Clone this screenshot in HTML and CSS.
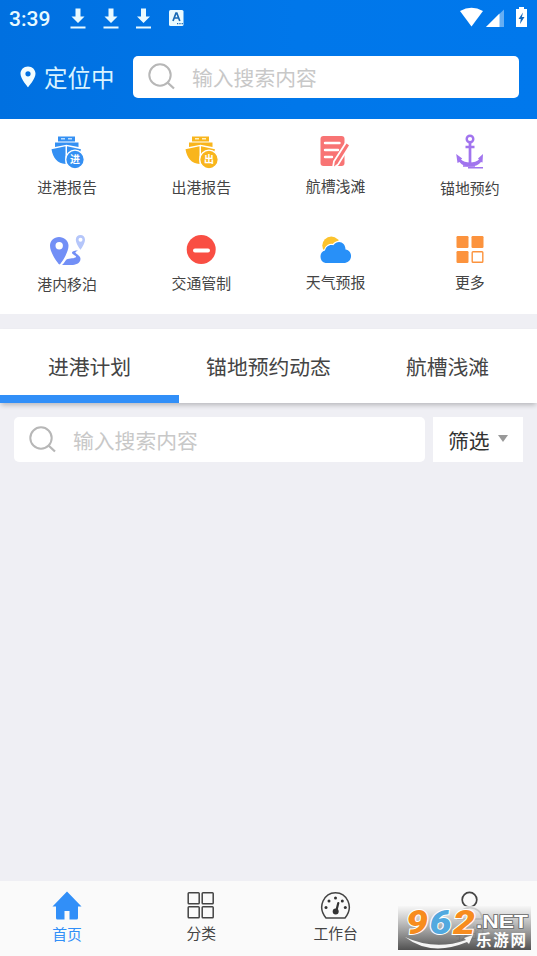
FILE: index.html
```html
<!DOCTYPE html>
<html lang="zh-CN">
<head>
<meta charset="utf-8">
<title>首页</title>
<link rel="stylesheet" href="styles.css">
</head>
<body>
<div class="app">
  <header class="header">
    <div class="status">
      <span class="clock">3:39</span>
      <svg class="status-left" width="120" height="24" viewBox="0 0 120 24" fill="#e9faff">
        <path d="M5.500 2h5v8h4l-6.500 6.500L1.500 10h4zM.5 20h15v2H.5z" transform="translate(0 .5)"/>
        <path d="M5.500 2h5v8h4l-6.500 6.500L1.500 10h4zM.5 20h15v2H.5z" transform="translate(33 .5)"/>
        <path d="M5.500 2h5v8h4l-6.500 6.500L1.500 10h4zM.5 20h15v2H.5z" transform="translate(65.500 .5)"/>
        <rect x="99" y="4" width="14.500" height="16" rx="1.500"/>
        <path d="m103 15 3-8h.8l3 8m-5.600-3h4.500" fill="none" stroke="#1769b5" stroke-width="1.700"/>
        <path d="M107 17h1.300v1.300H107zm2.300 0h1.300v1.300h-1.300zm2.300 0h1.300v1.300h-1.300z" fill="#1769b5"/>
      </svg>
      <svg class="status-right" width="70" height="24" viewBox="0 0 70 24" fill="#fff">
        <path d="M0 5Q11.500-1.500 23 5L11.500 20.500z"/>
        <path d="M26 21 44 3.500V21z" opacity=".4"/>
        <path d="M26 21 39.500 7.500V21z"/>
        <path d="M59 1h5v2H67v18H56V3h3z"/>
        <path d="m63 6.500-4.500 6.500h2.300L60 18l4.500-7h-2.600z" fill="#1267bd"/>
      </svg>
    </div>
    <div class="header-row">
      <svg class="pin" width="16" height="22" viewBox="0 0 16 22"><path fill="#f2fdff" fill-rule="evenodd" d="M8 .5C3.700.5.500 3.700.500 7.800.500 13 8 21.300 8 21.300S15.500 13 15.500 7.800C15.500 3.700 12.300.500 8 .500zm0 4.700a2.600 2.600 0 1 1 0 5.200 2.600 2.600 0 0 1 0-5.200z"/></svg>
      <span class="location">定位中</span>
      <div class="search search-top">
        <svg class="lens" width="27" height="27" viewBox="0 0 27 27" fill="none" stroke="#b7b7b7" stroke-width="2"><circle cx="12" cy="12" r="10.700"/><path d="m19.500 19.500 6.500 6" stroke-width="2.300"/></svg>
        <span>输入搜索内容</span>
      </div>
    </div>
  </header>

  <section class="menu">
    <div class="cell">
      <svg class="icon" viewBox="0 0 40 40"><g fill="#3490f3"><path d="M11 4.500h17v5H11zM8 10.500h23.500V15l-12-2.200L8 15z"/><path d="m4.500 17.300 14-3V32C10.500 31.500 6 26.500 4.500 17.300zM20 14.300l14 3-1.500 5H20z"/><circle cx="28" cy="27.500" r="9.300" stroke="#fff" stroke-width="1.300"/></g><path d="M14 6.800h4m3 0h4" stroke="#b9ddff" stroke-width="1.500"/><text class="badge-text" x="28" y="31">进</text></svg>
      <span>进港报告</span>
    </div>
    <div class="cell">
      <svg class="icon" viewBox="0 0 40 40"><g fill="#f9b51c"><path d="M11 4.500h17v5H11zM8 10.500h23.500V15l-12-2.200L8 15z"/><path d="m4.500 17.300 14-3V32C10.500 31.500 6 26.500 4.500 17.300zM20 14.300l14 3-1.500 5H20z"/><circle cx="28" cy="27.500" r="9.300" stroke="#fff" stroke-width="1.300"/></g><path d="M14 6.800h4m3 0h4" stroke="#fff0bd" stroke-width="1.500"/><text class="badge-text" x="28" y="31">出</text></svg>
      <span>出港报告</span>
    </div>
    <div class="cell">
      <svg class="icon" viewBox="0 0 40 40"><rect x="4.500" y="4" width="24" height="30" rx="3" fill="#f87474"/><path d="M9 11h14.500M9 18h13M9 25h7" stroke="#fff" stroke-width="2.400" stroke-linecap="round"/><path d="m30.500 11.500 2.500 1.700-11.500 18.500-3.500 2.800.8-4.800z" fill="#f87474" stroke="#fff" stroke-width="3.500"/><path d="m30.500 11.500 2.500 1.700-11.500 18.500-3.500 2.800.8-4.800z" fill="#f87474"/></svg>
      <span>航槽浅滩</span>
    </div>
    <div class="cell low">
      <svg class="icon" viewBox="0 0 40 40" fill="none" stroke="#a174ee"><circle cx="20" cy="7" r="3.300" stroke-width="2.400"/><path d="M20 10.500v22M15.500 15h9" stroke-width="2.700"/><path d="M6.200 22 7.500 31l2-1c4 6 17 6 21.500 0l1.500.5.500-8.500-5 4.500 1 1c-3.500 4-14.500 4-18 0l1.200-1z" fill="#a174ee" stroke="none"/><path d="M18 35.800h15M13 34h12" stroke-width="1.500"/></svg>
      <span>锚地预约</span>
    </div>
    <div class="cell low">
      <svg class="icon" viewBox="0 0 40 40"><path fill="#728ff6" fill-rule="evenodd" d="M12 7C7 7 3 10.800 3 15.800 3 23 11.500 34.500 12.500 34.500S21.500 23 21.500 15.800C21.500 10.800 17 7 12 7zm.2 5a3.700 3.700 0 1 1 0 7.400 3.700 3.700 0 0 1 0-7.400z"/><path d="M15 35c2-1 3-4.500 4.500-5.500 3-1.200 8.500-1 9.500-2.500.5-1.500-4.500-2.500-4-4.500.5-1.500 3-2 6-2-1.500.8-3 1.500-2.500 2.300.8 1.500 5 2.700 5 6 0 5-5.500 6.200-9 6.200z" fill="#728ff6"/><path fill="#b5c6fa" fill-rule="evenodd" d="M33.500 5c-2.700 0-4.700 2-4.700 4.700 0 4 4.700 10 4.700 10s4.500-6 4.500-10C38 7 36 5 33.500 5zm0 2.700a2 2 0 1 1 0 4 2 2 0 0 1 0-4z"/></svg>
      <span>港内移泊</span>
    </div>
    <div class="cell mid">
      <svg class="icon" viewBox="0 0 40 40"><circle cx="20.200" cy="19.500" r="14.500" fill="#f94e43"/><path d="M14 20.500h13" stroke="#fff" stroke-width="4" stroke-linecap="round"/></svg>
      <span>交通管制</span>
    </div>
    <div class="cell">
      <svg class="icon" viewBox="0 0 40 40"><circle cx="15.300" cy="15.500" r="9" fill="#fcc32d"/><path d="M9.500 33a6.500 6.500 0 0 1-.5-12.500c.8-4 4.500-6.500 8.300-5.300 5-6 12.200-2.500 12.200 4.300 7.500 1 7.500 12.500-.5 13.500z" fill="#2890f8" stroke="#fff" stroke-width="2.400" paint-order="stroke"/></svg>
      <span>天气预报</span>
    </div>
    <div class="cell">
      <svg class="icon" viewBox="0 0 40 40" fill="#fc933d"><rect x="6.500" y="6" width="12" height="12" rx="1.200"/><rect x="21.500" y="6" width="12" height="12" rx="1.200"/><rect x="6.500" y="21" width="12" height="12" rx="1.200"/><rect x="22.200" y="21.700" width="10.600" height="10.600" rx=".8" fill="#fff" stroke="#fc933d" stroke-width="1.400"/></svg>
      <span>更多</span>
    </div>
  </section>

  <nav class="tabs">
    <span class="tab active">进港计划</span>
    <span class="tab">锚地预约动态</span>
    <span class="tab">航槽浅滩</span>
  </nav>

  <div class="filters">
    <div class="search">
      <svg class="lens" width="27" height="27" viewBox="0 0 27 27" fill="none" stroke="#b7b7b7" stroke-width="2"><circle cx="12" cy="12" r="10.700"/><path d="m19.500 19.500 6.500 6" stroke-width="2.300"/></svg>
      <span>输入搜索内容</span>
    </div>
    <div class="filter">筛选<i class="caret"></i></div>
  </div>

  <main class="content"></main>

  <footer class="bottom">
    <div class="nav on">
      <svg class="nav-icon" viewBox="0 0 32 32"><path d="M16 1.500 1.500 16.500H5V28a1.500 1.500 0 0 0 1.500 1.500h7V21h5v8.500h7A1.500 1.500 0 0 0 27 28V16.500h3.500z" fill="#318ff8"/></svg>
      <span>首页</span>
    </div>
    <div class="nav">
      <svg class="nav-icon" viewBox="0 0 32 32" fill="none" stroke="#444" stroke-width="1.500"><rect x="3.200" y="2.700" width="11" height="11" rx=".8"/><rect x="17.200" y="2.700" width="11" height="11" rx=".8"/><rect x="3.200" y="16.700" width="11" height="11" rx=".8"/><rect x="17.200" y="16.700" width="11" height="11" rx=".8"/></svg>
      <span>分类</span>
    </div>
    <div class="nav">
      <svg class="nav-icon" viewBox="0 0 32 32"><path d="M6 28C-3.500 16.500 4.500 2.700 15.500 2.700S34.500 16.500 25 28z" fill="none" stroke="#444" stroke-width="1.500" stroke-linejoin="round"/><path d="m18.300 13-2 8" stroke="#333" stroke-width="2.200" stroke-linecap="round"/><g fill="#333"><circle cx="15.700" cy="21.500" r="3"/><circle cx="15.500" cy="8" r="1.500"/><circle cx="9" cy="11" r="1.500"/><circle cx="22.300" cy="11" r="1.500"/><circle cx="6" cy="17.500" r="1.500"/><circle cx="25.300" cy="17.500" r="1.500"/></g></svg>
      <span>工作台</span>
    </div>
    <div class="nav">
      <svg class="nav-icon" viewBox="0 0 32 32" fill="none" stroke="#444" stroke-width="1.700"><circle cx="15.500" cy="9.700" r="7.300"/><path d="M4 29c0-15 24-15 24 0z"/></svg>
      <span>我的</span>
    </div>
  </footer>

  <svg class="watermark" width="133" height="45" viewBox="0 0 133 45">
    <defs>
      <linearGradient id="shade" x1="0" y1="0" x2="0" y2="1"><stop offset="0" stop-color="#f6f6f6" stop-opacity=".8"/><stop offset=".35" stop-color="#bbb" stop-opacity=".88"/><stop offset="1" stop-color="#484848" stop-opacity=".95"/></linearGradient>
    </defs>
    <rect width="133" height="44" fill="url(#shade)"/>
    <path d="M7 31q30 14 61 3l-2-2 9-3-4 9-2-2Q33 51 7 31z" fill="#f4f4f4"/>
    <g class="mark-number">
      <text x="8" y="28" textLength="22" lengthAdjust="spacingAndGlyphs" fill="#f78c1e">9</text>
      <text x="31.500" y="28" textLength="22" lengthAdjust="spacingAndGlyphs" fill="#52a9df">6</text>
      <text x="55" y="28" textLength="22" lengthAdjust="spacingAndGlyphs" fill="#f78c1e">2</text>
    </g>
    <text class="mark-net" x="78" y="22" textLength="52" lengthAdjust="spacingAndGlyphs">.NET</text>
    <text class="mark-name" x="78" y="40" textLength="50">乐游网</text>
  </svg>
</div>
</body>
</html>
```
FILE: styles.css
```css
* { box-sizing: border-box; }

body {
  margin: 0;
  font-family: "Noto Sans CJK SC", sans-serif;
  font-weight: 400;
  color: #444;
}

svg { display: block; flex: none; }

.app {
  position: relative;
  display: flex;
  flex-direction: column;
  width: 537px;
  height: 956px;
  overflow: hidden;
  background: #efeff4;
}

.header {
  height: 118.5px;
  flex: none;
  background: linear-gradient(90deg, #0070e0, #0077ea 55%, #0078ec);
}

.status {
  display: flex;
  height: 37px;
  padding: 6px 7px 0 9px;
}

.clock {
  width: 61px;
  font: 500 21px/26px Roboto, sans-serif;
  color: #e9faff;
}

.status-right { margin-left: auto; }

.header-row {
  display: flex;
  align-items: center;
  height: 42px;
  margin-top: 18.5px;
  padding: 0 18px 0 20px;
}

.location {
  width: 89px;
  margin-left: 8px;
  font-size: 23.5px;
  line-height: 42px;
  color: #d9f3ff;
}

.search {
  display: flex;
  align-items: center;
  flex: 1;
  height: 45px;
  padding-left: 15px;
  border-radius: 5px;
  background: #fff;
  font-size: 20.8px;
  color: #c8c8c8;
}

.search-top { height: 42px; }

.search span { margin-left: 17px; line-height: 40px; }

.lens { margin-top: -1px; }

.menu {
  display: grid;
  grid-template-columns: repeat(4, 1fr);
  grid-template-rows: 98px 84px;
  height: 195.5px;
  flex: none;
  padding-top: 13.5px;
  background: #fff;
}

.cell {
  display: flex;
  flex-direction: column;
  align-items: center;
  font-size: 14.9px;
  line-height: 20px;
}

.cell span { margin-top: 5px; }
.cell:nth-child(3) span { margin-top: 4px; }
.cell:nth-child(n+5) span { margin-top: 2px; }
.cell.low span { margin-top: 6px; }
.cell.low:nth-child(n+5) span { margin-top: 4px; }
.cell.mid:nth-child(n+5) span { margin-top: 3px; }

.icon { width: 40px; height: 40px; }

.badge-text {
  font-size: 10px;
  font-weight: 700;
  text-anchor: middle;
  fill: #fff;
}

.tabs {
  display: flex;
  height: 74.5px;
  flex: none;
  margin-top: 14.5px;
  background: #fff;
  box-shadow: 0 3px 5px -1px rgba(0, 0, 0, .24);
}

.tab {
  flex: 1;
  padding-top: 1px;
  border-bottom: 8px solid transparent;
  font-size: 20.8px;
  line-height: 72px;
  text-align: center;
}

.tab.active { border-color: #318ff8; }

.filters {
  display: flex;
  gap: 8px;
  margin-top: 14px;
  padding: 0 14px;
}

.filter {
  display: flex;
  align-items: center;
  width: 90px;
  height: 45px;
  padding-left: 15px;
  background: #fff;
  font-size: 20.8px;
  color: #333;
}

.caret {
  margin: -2px 0 0 8px;
  border: 5.5px solid transparent;
  border-top: 7px solid #999;
  border-bottom: 0;
}

.content { flex: 1; }

.bottom {
  display: flex;
  height: 75px;
  flex: none;
  padding-top: 9px;
  background: #fafafa;
}

.nav {
  display: flex;
  flex: 1;
  flex-direction: column;
  align-items: center;
  font-size: 14.8px;
  line-height: 20px;
}

.nav span { margin-top: 1px; }
.nav.on { color: #318ff8; }
.nav.on span { margin-top: 2px; }
.nav-icon { width: 32px; height: 32px; }

.watermark { position: absolute; left: 398px; top: 906px; overflow: visible; }

.mark-number text {
  font: italic 900 34px Roboto, sans-serif;
  stroke: #fff;
  stroke-width: 2px;
  paint-order: stroke;
}

.mark-net {
  font: 700 18.5px "Liberation Sans", sans-serif;
  fill: #fff;
  stroke: #666;
  stroke-width: 1.5px;
  paint-order: stroke;
}

.mark-name {
  font-size: 15.5px;
  font-weight: 700;
  fill: #fff;
}
```
